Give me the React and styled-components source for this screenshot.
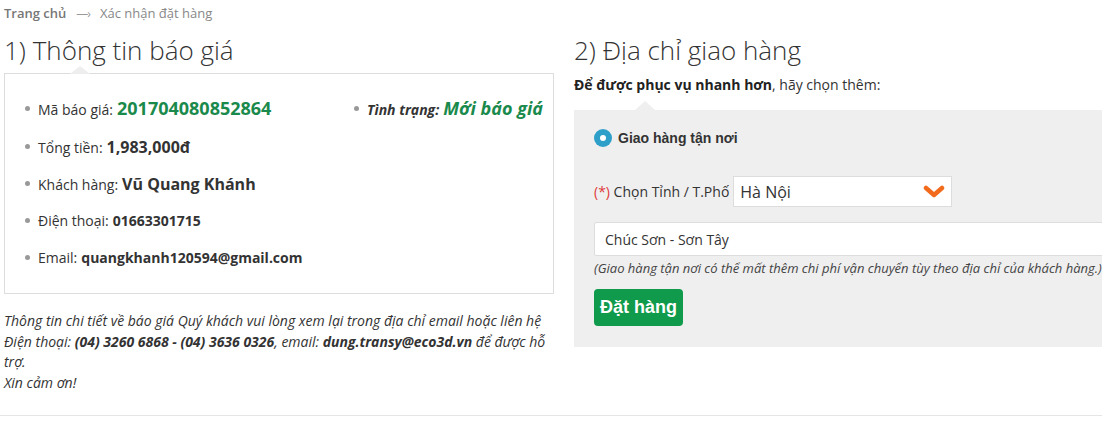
import React from "react";
import styled, { createGlobalStyle } from "styled-components";

const GlobalStyle = createGlobalStyle`
  html, body {
    margin: 0;
    padding: 0;
    background: #fff;
    overflow: hidden;
  }
  body {
    font-family: "Open Sans", "Liberation Sans", sans-serif;
    font-size: 14px;
    color: #333;
  }
`;

const Page = styled.div`
  width: 1102px;
  height: 428px;
  overflow: hidden;
`;

const Inner = styled.div`
  padding-left: 4px;
`;

const Breadcrumb = styled.div`
  display: flex;
  align-items: center;
  height: 26px;
  font-size: 13px;
  color: #888;
`;

const Crumb = styled.span`
  font-weight: ${(p) => (p.$home ? 600 : 400)};
  color: ${(p) => (p.$home ? "#777" : "#888")};
`;

const Arrow = styled.span`
  margin: 0 10px;
  color: #999;
  font-size: 12px;
  letter-spacing: -1px;
`;

const Columns = styled.div`
  display: flex;
  gap: 20px;
`;

const LeftCol = styled.div`
  width: 550px;
  flex-shrink: 0;
`;

const RightCol = styled.div`
  width: 560px;
  flex-shrink: 0;
`;

const Heading = styled.h2`
  margin: 4px 0 0;
  font-size: 26px;
  font-weight: 300;
  line-height: 40px;
  color: #333;
`;

const InfoBox = styled.div`
  position: relative;
  margin-top: 3px;
  border: 1px solid #ddd;
  padding: 14px 10px 17px 20px;

  &::before {
    content: "";
    position: absolute;
    top: -8px;
    left: 65px;
    border-left: 10px solid transparent;
    border-right: 10px solid transparent;
    border-bottom: 8px solid #eee;
  }
`;

const List = styled.ul`
  list-style: none;
  margin: 0;
  padding: 0;
`;

const Item = styled.li`
  display: flex;
  align-items: center;
  justify-content: ${(p) => (p.$split ? "space-between" : "flex-start")};
  min-height: ${(p) => (p.$split ? 40 : 37)}px;
`;

const Entry = styled.span`
  display: inline-flex;
  align-items: baseline;
  gap: 4px;

  &::before {
    content: "";
    width: 5px;
    height: 5px;
    border-radius: 50%;
    background: #999;
    margin-right: 4px;
    align-self: center;
  }
`;

const Strong = styled.b`
  font-weight: 700;
  font-size: ${(p) => p.$size || 14}px;
  color: ${(p) => (p.$green ? "#1a8a4c" : "#333")};
  font-style: ${(p) => (p.$italic ? "italic" : "normal")};
`;

const StatusLabel = styled.span`
  font-weight: 700;
  font-style: italic;
  color: #333;
`;

const Note = styled.p`
  margin: 17px 0 0;
  font-size: 14px;
  font-style: italic;
  line-height: 20.7px;
  color: #333;

  b {
    font-weight: 700;
  }
`;

const Lead = styled.p`
  margin: 3px 0 0;
  line-height: 24px;
  color: #333;

  b {
    font-weight: 700;
    color: #222;
  }
`;

const Panel = styled.div`
  position: relative;
  margin-top: 13px;
  background: #efefef;
  padding: 19px 20px 21px 20px;

  &::before {
    content: "";
    position: absolute;
    top: -9px;
    left: 61px;
    border-left: 10px solid transparent;
    border-right: 10px solid transparent;
    border-bottom: 9px solid #efefef;
  }
`;

const RadioRow = styled.label`
  display: flex;
  align-items: center;
  gap: 6px;
  height: 18px;
  font-family: "Liberation Sans", Arial, sans-serif;
  font-weight: 700;
  font-size: 14px;
  color: #333;
`;

const RadioDot = styled.span`
  width: 18px;
  height: 18px;
  border-radius: 50%;
  background: #2d9fc9;
  display: flex;
  align-items: center;
  justify-content: center;

  &::after {
    content: "";
    width: 6px;
    height: 6px;
    border-radius: 50%;
    background: #fff;
  }
`;

const FieldRow = styled.div`
  display: flex;
  align-items: center;
  gap: 4px;
  margin-top: 29px;
`;

const Required = styled.span`
  color: #e03a3a;
`;

const Select = styled.div`
  width: 219px;
  height: 31px;
  box-sizing: border-box;
  background: #fff;
  border: 1px solid #ddd;
  display: flex;
  align-items: center;
  justify-content: space-between;
  padding: 0 6px 0 6px;
  font-size: 16px;
  color: #333;
`;

const Input = styled.div`
  margin-top: 15px;
  height: 34px;
  box-sizing: border-box;
  background: #fff;
  border: 1px solid #ddd;
  border-radius: 2px;
  display: flex;
  align-items: center;
  padding: 0 10px;
  font-size: 14px;
  color: #333;
`;

const Hint = styled.div`
  margin-top: 3px;
  font-size: 13px;
  font-style: italic;
  line-height: 19px;
  color: #444;
  white-space: nowrap;
`;

const OrderButton = styled.button`
  margin-top: 11px;
  width: 89px;
  height: 37px;
  border: none;
  border-radius: 4px;
  background: #0f9b4b;
  color: #fff;
  font-family: "Liberation Sans", Arial, sans-serif;
  font-weight: 700;
  font-size: 18px;
  padding: 0;
`;

const Divider = styled.hr`
  margin: 21px 0 0;
  border: none;
  border-top: 1px solid #e5e5e5;
`;

function Chevron() {
  return (
    <svg width="22" height="14" viewBox="0 0 22 14">
      <polyline
        points="3,3 11,10 19,3"
        fill="none"
        stroke="#f26a1b"
        strokeWidth="4.5"
        strokeLinecap="round"
        strokeLinejoin="round"
      />
    </svg>
  );
}

export default function App() {
  return (
    <Page>
      <GlobalStyle />
      <Inner>
        <Breadcrumb>
          <Crumb $home>Trang chủ</Crumb>
          <Arrow>—›</Arrow>
          <Crumb>Xác nhận đặt hàng</Crumb>
        </Breadcrumb>
        <Columns>
          <LeftCol>
            <Heading>1) Thông tin báo giá</Heading>
            <InfoBox>
              <List>
                <Item $split>
                  <Entry>
                    Mã báo giá: <Strong $green $size={18}>201704080852864</Strong>
                  </Entry>
                  <Entry>
                    <StatusLabel>Tình trạng:</StatusLabel>
                    <Strong $green $italic $size={18}>Mới báo giá</Strong>
                  </Entry>
                </Item>
                <Item>
                  <Entry>
                    Tổng tiền: <Strong $size={16}>1,983,000đ</Strong>
                  </Entry>
                </Item>
                <Item>
                  <Entry>
                    Khách hàng: <Strong $size={16}>Vũ Quang Khánh</Strong>
                  </Entry>
                </Item>
                <Item>
                  <Entry>
                    Điện thoại: <Strong>01663301715</Strong>
                  </Entry>
                </Item>
                <Item>
                  <Entry>
                    Email: <Strong>quangkhanh120594@gmail.com</Strong>
                  </Entry>
                </Item>
              </List>
            </InfoBox>
            <Note>
              Thông tin chi tiết về báo giá Quý khách vui lòng xem lại trong địa chỉ email hoặc liên hệ
              <br />
              Điện thoại: <b>(04) 3260 6868 - (04) 3636 0326</b>, email: <b>dung.transy@eco3d.vn</b> để được hỗ
              <br />
              trợ.
              <br />
              Xin cảm ơn!
            </Note>
          </LeftCol>
          <RightCol>
            <Heading>2) Địa chỉ giao hàng</Heading>
            <Lead>
              <b>Để được phục vụ nhanh hơn</b>, hãy chọn thêm:
            </Lead>
            <Panel>
              <RadioRow>
                <RadioDot />
                Giao hàng tận nơi
              </RadioRow>
              <FieldRow>
                <span>
                  <Required>(*)</Required> Chọn Tỉnh / T.Phố
                </span>
                <Select>
                  Hà Nội
                  <Chevron />
                </Select>
              </FieldRow>
              <Input>Chúc Sơn - Sơn Tây</Input>
              <Hint>(Giao hàng tận nơi có thể mất thêm chi phí vận chuyển tùy theo địa chỉ của khách hàng.)</Hint>
              <OrderButton>Đặt hàng</OrderButton>
            </Panel>
          </RightCol>
        </Columns>
      </Inner>
      <Divider />
    </Page>
  );
}
